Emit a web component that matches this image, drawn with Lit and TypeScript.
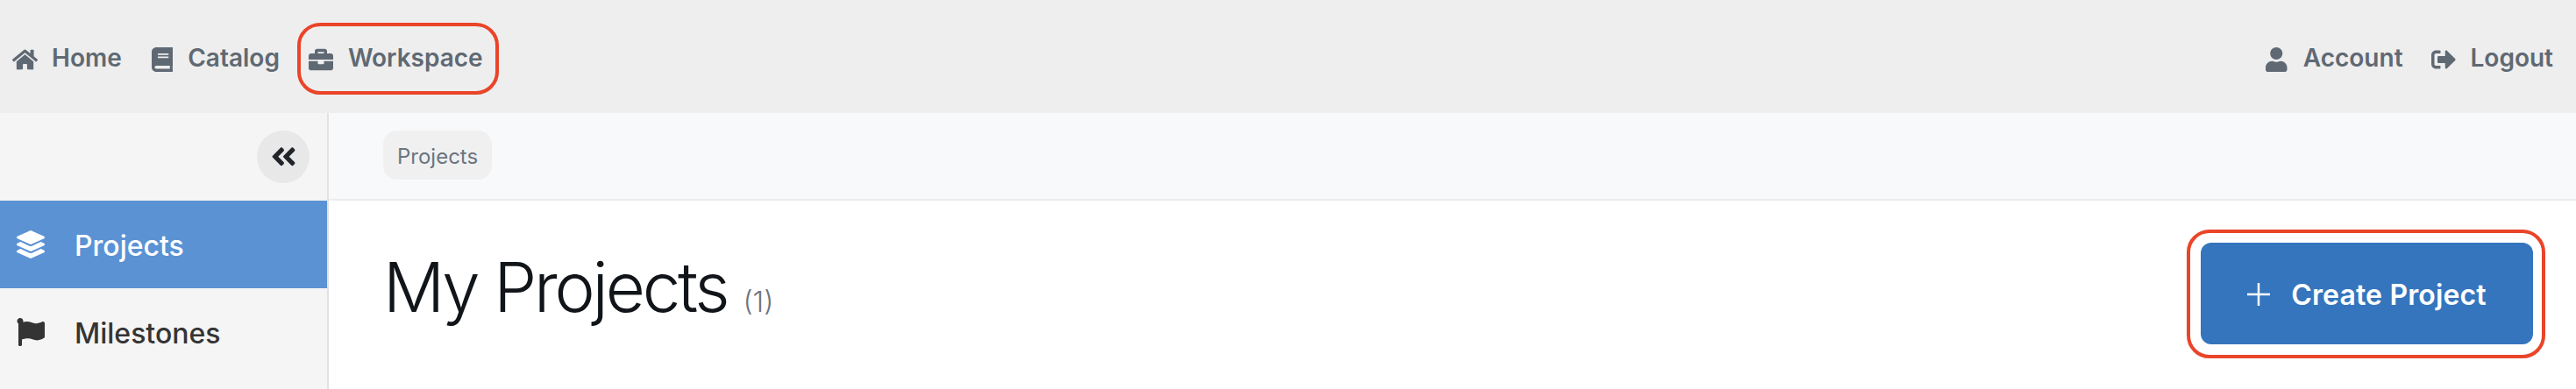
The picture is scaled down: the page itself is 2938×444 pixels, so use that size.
import { LitElement, html, css, svg } from "lit";
import { customElement } from "lit/decorators.js";

const P: Record<string, [string, string]> = {
  home: ["0 0 576 512", "M280.37 148.26L96 300.11V464a16 16 0 0 0 16 16l112.06-.29a16 16 0 0 0 15.92-16V368a16 16 0 0 1 16-16h64a16 16 0 0 1 16 16v95.64a16 16 0 0 0 16 16.05L464 480a16 16 0 0 0 16-16V300L295.67 148.26a12.19 12.19 0 0 0-15.3 0zM571.6 251.47L488 182.56V44.05a12 12 0 0 0-12-12h-56a12 12 0 0 0-12 12v72.61L318.47 43a48 48 0 0 0-61 0L4.34 251.47a12 12 0 0 0-1.6 16.9l25.5 31A12 12 0 0 0 45.15 301l235.22-193.74a12.19 12.19 0 0 1 15.3 0L530.9 301a12 12 0 0 0 16.9-1.6l25.5-31a12 12 0 0 0-1.7-16.93z"],
  book: ["0 0 448 512", "M448 360V24c0-13.3-10.7-24-24-24H96C43 0 0 43 0 96v320c0 53 43 96 96 96h328c13.3 0 24-10.7 24-24v-16c0-7.5-3.5-14.3-8.9-18.7-4.2-15.4-4.2-59.3 0-74.7 5.4-4.3 8.9-11.1 8.9-18.6zM128 134c0-3.3 2.7-6 6-6h212c3.3 0 6 2.7 6 6v20c0 3.3-2.7 6-6 6H134c-3.3 0-6-2.7-6-6v-20zm0 64c0-3.3 2.7-6 6-6h212c3.3 0 6 2.7 6 6v20c0 3.3-2.7 6-6 6H134c-3.3 0-6-2.7-6-6v-20zm253.4 250H96c-17.7 0-32-14.3-32-32 0-17.6 14.4-32 32-32h285.4c-1.9 17.1-1.9 46.9 0 64z"],
  briefcase: ["0 0 512 512", "M320 336c0 8.84-7.16 16-16 16h-96c-8.84 0-16-7.16-16-16v-48H0v144c0 25.6 22.4 48 48 48h416c25.6 0 48-22.4 48-48V288H320v48zm144-208h-80V80c0-25.6-22.4-48-48-48H176c-25.6 0-48 22.4-48 48v48H48c-25.6 0-48 22.4-48 48v80h512v-80c0-25.6-22.4-48-48-48zm-144 0H192V96h128v32z"],
  user: ["0 0 448 512", "M224 256c70.7 0 128-57.3 128-128S294.7 0 224 0 96 57.3 96 128s57.3 128 128 128zm89.6 32h-16.7c-22.2 10.2-46.9 16-72.9 16s-50.6-5.8-72.9-16h-16.7C60.2 288 0 348.2 0 422.4V464c0 26.5 21.5 48 48 48h352c26.5 0 48-21.5 48-48v-41.6c0-74.2-60.2-134.4-134.4-134.4z"],
  logout: ["0 0 512 512", "M497 273L329 441c-15 15-41 4.5-41-17v-96H152c-13.3 0-24-10.7-24-24v-96c0-13.3 10.7-24 24-24h136V88c0-21.4 25.9-32 41-17l168 168c9.3 9.4 9.3 24.6 0 34zM192 436v-40c0-6.6-5.4-12-12-12H96c-17.7 0-32-14.3-32-32V160c0-17.7 14.3-32 32-32h84c6.6 0 12-5.4 12-12V76c0-6.6-5.4-12-12-12H96c-53 0-96 43-96 96v192c0 53 43 96 96 96h84c6.6 0 12-5.4 12-12z"],
  layers: ["0 0 512 512", "M12.41 148.02l232.94 105.67c6.8 3.09 14.49 3.09 21.29 0l232.94-105.67c16.55-7.51 16.55-32.52 0-40.03L266.65 2.31a25.607 25.607 0 0 0-21.29 0L12.41 107.98c-16.55 7.51-16.55 32.53 0 40.04zm487.18 88.28l-58.09-26.33-161.64 73.27c-7.56 3.43-15.59 5.17-23.86 5.17s-16.29-1.74-23.86-5.17L70.51 209.97l-58.1 26.33c-16.55 7.5-16.55 32.5 0 40l232.94 105.59c6.8 3.08 14.49 3.08 21.29 0L499.59 276.3c16.55-7.5 16.55-32.5 0-40zm0 127.8l-57.87-26.23-161.86 73.37c-7.56 3.43-15.59 5.17-23.86 5.17s-16.29-1.74-23.86-5.17L70.29 337.87 12.41 364.1c-16.55 7.5-16.55 32.5 0 40l232.94 105.59c6.8 3.08 14.49 3.08 21.29 0L499.59 404.1c16.55-7.5 16.55-32.5 0-40z"],
  flag: ["0 0 512 512", "M349.565 98.783C295.978 98.783 251.721 64 184.348 64c-24.955 0-47.309 4.384-68.045 12.013a55.947 55.947 0 0 0 3.586-23.562C118.117 24.015 94.806 1.206 66.338.048 34.345-1.254 8 24.296 8 56c0 19.026 9.497 35.825 24 45.945V488c0 13.255 10.745 24 24 24h16c13.255 0 24-10.745 24-24v-94.4c28.311-12.064 63.582-22.122 114.435-22.122 53.588 0 97.844 34.783 165.217 34.783 48.169 0 86.667-16.294 122.505-40.858C506.84 359.452 512 349.571 512 339.045v-243.1c0-23.393-24.269-38.87-45.485-29.016-34.338 15.948-76.454 31.854-116.95 31.854z"],
  chevrons: ["0 0 448 512", "M223.7 239l136-136c9.4-9.4 24.6-9.4 33.9 0l22.6 22.6c9.4 9.4 9.4 24.6 0 33.9L319.9 256l96.4 96.4c9.4 9.4 9.4 24.6 0 33.9L393.7 409c-9.4 9.4-24.6 9.4-33.9 0l-136-136c-9.5-9.4-9.5-24.6-.1-34zm-192 34l136 136c9.4 9.4 24.6 9.4 33.9 0l22.6-22.6c9.4-9.4 9.4-24.6 0-33.9L127.9 256l96.4-96.4c9.4-9.4 9.4-24.6 0-33.9L201.7 103c-9.4-9.4-24.6-9.4-33.9 0l-136 136c-9.5 9.4-9.5 24.6-.1 34z"],
};

function icon(name: string, cls: string) {
  const [vb, d] = P[name];
  return html`<svg class=${cls} viewBox=${vb} preserveAspectRatio="none" fill="currentColor">${svg`<path d=${d}></path>`}</svg>`;
}

@customElement("app-root")
export class AppRoot extends LitElement {
  static styles = css`
    :host { display: block; width: 2938px; height: 444px; overflow: hidden; font-family: Inter, "Liberation Sans", sans-serif; background: #fff; }
    .top { height: 129px; background: #eee; display: flex; align-items: center; justify-content: space-between; padding: 2px 26px 0 14px; box-sizing: border-box; color: #5f6973; }
    .group { display: flex; align-items: center; }
    .nav { display: flex; align-items: center; font-size: 28px; font-weight: 600; line-height: 32px; position: relative; }
    .nav svg { margin-top: 4px; }
    .nav.home { margin-right: 34px; }
    .nav.catalog { margin-right: 33px; }
    .nav.account { margin-right: 32px; }
    svg { flex: none; }
    .ic-home { width: 29px; height: 26px; margin-right: 16px; }
    .ic-book { width: 24.5px; height: 28px; margin-right: 17px; }
    .ic-case { width: 28px; height: 28px; margin-right: 17px; }
    .ic-user { width: 24.5px; height: 28px; margin-right: 18px; }
    .ic-logout { width: 28px; height: 28px; margin-right: 17px; }
    .ring::after { content: ""; position: absolute; box-sizing: border-box; border: 4.5px solid #ea4429; pointer-events: none; }
    .nav.ring::after { left: -13px; right: -18px; top: -24px; bottom: -26px; border-radius: 26px; }
    .body { display: flex; height: 315px; }
    .side { width: 375px; box-sizing: border-box; background: #f5f5f5; border-right: 2px solid #e2e2e2; flex: none; }
    .collapse-row { height: 100px; display: flex; align-items: center; justify-content: flex-end; padding-right: 20px; box-sizing: border-box; }
    .collapse { width: 60px; height: 60px; border-radius: 50%; background: #e8e8e8; display: flex; align-items: center; justify-content: center; color: #212529; }
    .ic-chev { width: 29px; height: 33.5px; }
    .item { height: 100px; box-sizing: border-box; padding: 2px 0 0 19px; display: flex; align-items: center; font-size: 32px; font-weight: 500; color: #343434; }
    .item.on { background: #5b92d4; color: #fff; }
    .ic-side { width: 32px; height: 32px; margin: 0 34px 2px 0; }
    .main { flex: 1; min-width: 0; }
    .crumbs { height: 100px; box-sizing: border-box; background: #f8f9fa; border-bottom: 2px solid #ebecee; padding: 20px 0 0 62px; }
    .pill { display: inline-block; box-sizing: border-box; height: 56px; line-height: 52px; padding: 4px 16px 0; border-radius: 16px; background: #f0f0f0; color: #6c757d; font-size: 24px; font-weight: 400; }
    .head { display: flex; align-items: flex-start; justify-content: space-between; padding: 52px 49px 0 62px; }
    .title { margin: 0; font-size: 78px; font-weight: 300; line-height: 94px; color: #111519; letter-spacing: -3.2px; }
    .count { font-size: 32px; font-weight: 300; color: #6c757d; margin-left: 18px; letter-spacing: 0; }
    .btn { position: relative; width: 379px; height: 116px; margin-top: -4px; box-sizing: border-box; border: none; border-radius: 12px; background: #3575bd; color: #fff; display: flex; align-items: center; justify-content: center; font: 600 32px Inter, "Liberation Sans", sans-serif; padding: 2px 0 0; letter-spacing: 0.15px; }
    .btn.ring::after { inset: -15px -14px -16px -16px; border-radius: 26px; }
    .plus { width: 26px; height: 26px; margin-right: 24px; stroke: currentColor; stroke-width: 2.5; fill: none; }
  `;

  render() {
    return html`
      <div class="top">
        <div class="group">
          <div class="nav home">${icon("home", "ic-home")}Home</div>
          <div class="nav catalog">${icon("book", "ic-book")}Catalog</div>
          <div class="nav ring">${icon("briefcase", "ic-case")}Workspace</div>
        </div>
        <div class="group">
          <div class="nav account">${icon("user", "ic-user")}Account</div>
          <div class="nav">${icon("logout", "ic-logout")}Logout</div>
        </div>
      </div>
      <div class="body">
        <div class="side">
          <div class="collapse-row"><div class="collapse">${icon("chevrons", "ic-chev")}</div></div>
          <div class="item on">${icon("layers", "ic-side")}Projects</div>
          <div class="item">${icon("flag", "ic-side")}Milestones</div>
        </div>
        <div class="main">
          <div class="crumbs"><span class="pill">Projects</span></div>
          <div class="head">
            <h1 class="title">My Projects<span class="count">(1)</span></h1>
            <button class="btn ring">
              <svg class="plus" viewBox="0 0 26 26"><path d="M13 0V26M0 13H26"></path></svg>
              Create Project
            </button>
          </div>
        </div>
      </div>
    `;
  }
}
